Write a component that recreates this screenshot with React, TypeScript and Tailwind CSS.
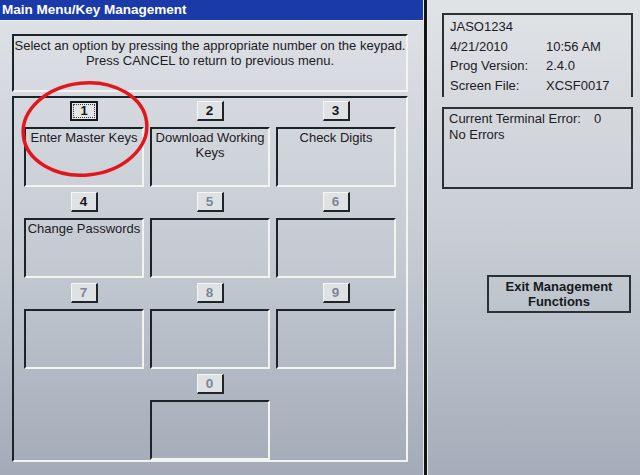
import React from "react";

const cells = [
  { key: "1", label: "Enter Master Keys", enabled: true, focused: true },
  { key: "2", label: "Download Working Keys", enabled: true },
  { key: "3", label: "Check Digits", enabled: true },
  { key: "4", label: "Change Passwords", enabled: true },
  { key: "5", label: "", enabled: false },
  { key: "6", label: "", enabled: false },
  { key: "7", label: "", enabled: false },
  { key: "8", label: "", enabled: false },
  { key: "9", label: "", enabled: false },
];

function KeyButton({ k, enabled, focused }: { k: string; enabled: boolean; focused?: boolean }) {
  if (focused) {
    return (
      <div className="flex h-[20px] w-[28px] items-stretch border-2 border-[#15191c] bg-[#e2e4e6] p-[1px]">
        <div className="flex flex-1 items-center justify-center border border-dotted border-[#3a3f45] text-[13px] font-bold leading-[12px] text-[#15191c]">
          {k}
        </div>
      </div>
    );
  }
  return (
    <div
      className={`flex h-[20px] w-[27px] items-center justify-center border-t border-l border-t-[#f6f6f4] border-l-[#f6f6f4] border-r-2 border-b-2 border-r-[#1e2428] border-b-[#1e2428] bg-[#dfe2e5] text-[13.5px] font-bold leading-none ${
        enabled ? "text-[#15191c]" : "text-[#7d8596]"
      }`}
    >
      {k}
    </div>
  );
}

function Cell({ k, label, enabled, focused }: { k: string; label: string; enabled: boolean; focused?: boolean }) {
  return (
    <div className="flex flex-col items-center">
      <KeyButton k={k} enabled={enabled} focused={focused} />
      <div className="mt-[6px] h-[60px] w-full border-t-2 border-l-2 border-t-[#1b2529] border-l-[#1b2529] border-b-2 border-r-2 border-b-[#f3f3ef] border-r-[#f3f3ef] pt-[1px] text-center text-[13px] leading-[15px] text-[#1c2024]">
        {label}
      </div>
    </div>
  );
}

export default function App() {
  return (
    <div
      className="relative flex h-[475px] w-[640px] overflow-hidden bg-[#c4c9d1]"
      style={{ fontFamily: '"Liberation Sans", Arial, sans-serif' }}
    >
      {/* 왼쪽: 메뉴 */}
      <div className="flex w-[423px] flex-col">
        <div className="flex h-[20px] items-center bg-[#1b3aa9] pl-[2px] text-[13.5px] font-bold text-white">
          Main Menu/Key Management
        </div>
        <div className="flex flex-1 flex-col border-t border-t-[#eef0f2] bg-gradient-to-b from-[#dde0e5] via-[#c6cbd3] to-[#a3abb8] pl-[12px] pr-[15px]">
          {/* 안내문 */}
          <div className="mt-[13px] h-[58px] border-t-2 border-l-2 border-t-[#1b2529] border-l-[#1b2529] border-b-2 border-r-2 border-b-[#f3f3ef] border-r-[#f3f3ef] pt-[2px] text-center text-[13px] leading-[15px] text-[#1c2024]">
            <div>Select an option by pressing the appropriate number on the keypad.</div>
            <div>Press CANCEL to return to previous menu.</div>
          </div>

          {/* 키 그리드 */}
          <div className="mt-[4px] h-[366px] border-t-2 border-l-2 border-t-[#1b2529] border-l-[#1b2529] border-b-2 border-r-2 border-b-[#f3f3ef] border-r-[#f3f3ef] px-[10px] pt-[3px]">
            <div className="grid grid-cols-3 gap-x-[6px] gap-y-[5px]">
              {cells.map((c) => (
                <Cell key={c.key} k={c.key} label={c.label} enabled={c.enabled} focused={c.focused} />
              ))}
              <div />
              <Cell k="0" label="" enabled={false} />
              <div />
            </div>
          </div>
        </div>
      </div>

      {/* 구분선 */}
      <div className="flex w-[5px]">
        <div className="w-[1px] bg-[#e8e6e0]" />
        <div className="w-[3px] bg-[#101418]" />
        <div className="w-[1px] bg-[#eceae4]" />
      </div>

      {/* 오른쪽: 상태 */}
      <div className="flex flex-1 flex-col bg-gradient-to-b from-[#e0e3e6] via-[#c8cdd4] to-[#a5adba] pl-[14px] pr-[7px] text-[13px] text-[#1c2024]">
        <div className="mt-[13px] h-[84px] border-t-2 border-l-2 border-r-2 border-[#2a3034] pl-[6px] pt-[4px]">
          <div className="grid grid-cols-[96px_1fr] gap-y-[4px] leading-[15.5px]">
            <div className="col-span-2">JASO1234</div>
            <div>4/21/2010</div>
            <div>10:56 AM</div>
            <div>Prog Version:</div>
            <div>2.4.0</div>
            <div>Screen File:</div>
            <div>XCSF0017</div>
          </div>
        </div>
        <div className="mt-[10px] h-[82px] border-2 border-[#2a3034] pl-[5px] pt-[2px] leading-[16px]">
          <div className="flex">
            <span className="w-[145px]">Current Terminal Error:</span>
            <span>0</span>
          </div>
          <div>No Errors</div>
        </div>

        <div className="mt-[86px] flex justify-end pr-[2px]">
          <div className="flex h-[38px] w-[144px] flex-col items-center justify-center border-2 border-[#2a3034] text-[13px] font-bold leading-[15px] text-[#15191c]">
            <span>Exit Management</span>
            <span>Functions</span>
          </div>
        </div>
      </div>

      {/* 빨간 원 표시 */}
      <svg className="pointer-events-none absolute left-0 top-0" width="640" height="475">
        <ellipse
          cx="85"
          cy="129"
          rx="62"
          ry="46"
          fill="none"
          stroke="#e3161b"
          strokeWidth="3.5"
          transform="rotate(-6 85 129)"
        />
      </svg>
    </div>
  );
}
